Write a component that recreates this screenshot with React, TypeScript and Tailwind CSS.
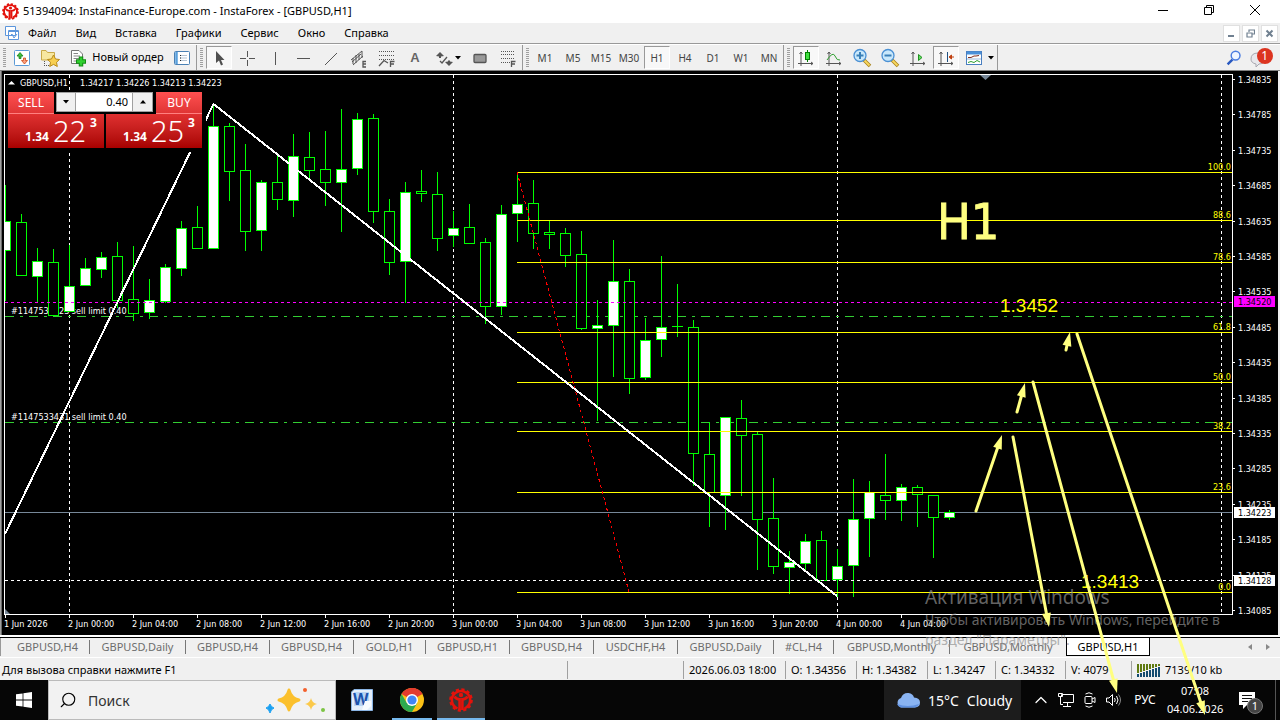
import type { ReactNode } from "react";
import { Search, ChevronUp } from "lucide-react";

const MENU = ["Файл", "Вид", "Вставка", "Графики", "Сервис", "Окно", "Справка"];
const TIMEFRAMES = ["M1", "M5", "M15", "M30", "H1", "H4", "D1", "W1", "MN"];

const TABS = [
  { name: "GBPUSD,H4", width: "w-[84px]" },
  { name: "GBPUSD,Daily", width: "w-[96px]" },
  { name: "GBPUSD,H4", width: "w-[84px]" },
  { name: "GBPUSD,H4", width: "w-[84px]" },
  { name: "GOLD,H1", width: "w-[72px]" },
  { name: "GBPUSD,H1", width: "w-[84px]" },
  { name: "GBPUSD,H4", width: "w-[84px]" },
  { name: "USDCHF,H4", width: "w-[84px]" },
  { name: "GBPUSD,Daily", width: "w-[96px]" },
  { name: "#CL,H4", width: "w-[60px]" },
  { name: "GBPUSD,Monthly", width: "w-[116px]" },
  { name: "GBPUSD,Monthly", width: "w-[116px]" },
];

const STATUS = [
  { text: "", width: "w-[116px]" },
  { text: "2026.06.03 18:00", width: "w-[102px]" },
  { text: "O: 1.34356", width: "w-[71px]" },
  { text: "H: 1.34382", width: "w-[71px]" },
  { text: "L: 1.34247", width: "w-[68px]" },
  { text: "C: 1.34332", width: "w-[70px]" },
  { text: "V: 4079", width: "w-[66px]" },
];

/* high, body top, body bottom, low, bullish */
const CANDLES: [number, number, number, number, number][] = [
  [185, 221, 251, 301, 1], [214, 222, 276, 276, 0], [248, 261, 277, 302, 1], [249, 262, 316, 316, 0],
  [245, 286, 312, 312, 1], [258, 268, 286, 286, 1], [252, 257, 270, 278, 1], [242, 256, 301, 308, 0],
  [246, 299, 314, 321, 0], [279, 300, 313, 319, 1], [264, 267, 302, 303, 1], [221, 228, 269, 276, 1],
  [206, 227, 249, 249, 0], [106, 126, 249, 249, 1], [123, 126, 172, 201, 0], [144, 170, 232, 251, 0],
  [180, 182, 231, 251, 1], [155, 182, 200, 210, 0], [134, 156, 201, 217, 1], [132, 157, 171, 178, 0],
  [131, 169, 183, 206, 0], [109, 169, 183, 232, 1], [113, 119, 169, 175, 1], [114, 118, 212, 223, 0],
  [199, 211, 263, 275, 0], [182, 192, 262, 303, 1], [170, 191, 194, 202, 0], [172, 194, 239, 251, 0],
  [211, 228, 236, 247, 1], [204, 227, 244, 244, 0], [238, 242, 307, 324, 0], [205, 214, 307, 315, 1],
  [172, 204, 214, 242, 1], [180, 203, 234, 249, 0], [221, 232, 235, 249, 0], [228, 233, 256, 267, 0],
  [231, 254, 329, 330, 0], [300, 325, 329, 421, 1], [240, 281, 326, 377, 1], [269, 281, 379, 394, 0],
  [318, 340, 378, 380, 1], [256, 327, 340, 357, 1], [284, 326, 327, 337, 0], [320, 327, 454, 486, 0],
  [422, 454, 493, 527, 0], [417, 417, 496, 530, 1], [400, 418, 436, 496, 0], [432, 434, 520, 570, 0],
  [478, 518, 567, 574, 0], [551, 562, 568, 594, 1], [534, 541, 564, 570, 1], [531, 540, 581, 581, 0],
  [549, 566, 580, 597, 1], [479, 519, 566, 597, 1], [481, 492, 519, 557, 1], [454, 495, 501, 520, 0],
  [484, 487, 501, 521, 1], [485, 487, 495, 527, 0], [495, 495, 518, 558, 0], [510, 512, 518, 520, 1],
];

const FIBO = [
  { y: 172, label: "100.0" },
  { y: 220, label: "88.6" },
  { y: 262, label: "78.6" },
  { y: 332, label: "61.8" },
  { y: 382, label: "50.0" },
  { y: 431, label: "38.2" },
  { y: 492, label: "23.6" },
  { y: 592, label: "0.0" },
];

const PRICES = [
  [79, "1.34835"], [114, "1.34785"], [150, "1.34735"], [185, "1.34685"], [221, "1.34635"], [256, "1.34585"],
  [291, "1.34535"], [327, "1.34485"], [362, "1.34435"], [398, "1.34385"], [433, "1.34335"], [468, "1.34285"],
  [504, "1.34235"], [539, "1.34185"], [575, "1.34135"], [610, "1.34085"],
] as [number, string][];

const DATES = [
  "1 Jun 2026", "2 Jun 00:00", "2 Jun 04:00", "2 Jun 08:00", "2 Jun 12:00", "2 Jun 16:00", "2 Jun 20:00",
  "3 Jun 00:00", "3 Jun 04:00", "3 Jun 08:00", "3 Jun 12:00", "3 Jun 16:00", "3 Jun 20:00", "4 Jun 00:00", "4 Jun 04:00",
];

const ARROWS = [
  [976, 511, 1002, 435],
  [1017, 412, 1025, 383],
  [1066, 350, 1070, 332],
  [1013, 437, 1049, 627],
  [1033, 382, 1117, 693],
  [1077, 334, 1205, 715],
];

/* Broker logo: gear ring with a figure inside */
function GearLogo({ className }: { className: string }) {
  return (
    <svg viewBox="0 0 24 24" className={className} fill="none" stroke="#e3120b" aria-hidden="true">
      <circle cx="12" cy="12" r="10.4" strokeWidth="2.8" strokeDasharray="3.1 2.35" />
      <path d="M8.5 20.4A9 9 0 0 1 6 5.2M15.5 20.4A9 9 0 0 0 18 5.2M6 5.2Q9 3 12 3T18 5.2" strokeWidth="2.6" />
      <circle cx="12" cy="7" r="2.2" fill="#e3120b" stroke="none" />
      <path d="M5.5 8.5Q7 11.2 10.6 11.2V22M18.5 8.5Q17 11.2 13.4 11.2V22" strokeWidth="2.6" />
    </svg>
  );
}

function Tool({ label, pressed, children, className = "w-[26px]" }: { label: string; pressed?: boolean; children: ReactNode; className?: string }) {
  return (
    <button
      type="button"
      aria-label={label}
      className={`mx-px flex h-[23px] shrink-0 items-center justify-center border ${className} ${
        pressed ? "border-t-[#999] border-l-[#999] border-r-white border-b-white bg-[#f8f8f8]" : "border-transparent"
      }`}
    >
      {children}
    </button>
  );
}

function Group({ children }: { children: ReactNode }) {
  return (
    <div className="flex h-full items-center border-r border-[#999]">
      <span className="flex h-5 w-2 shrink-0 justify-center">
        <span className="h-full w-[3px] bg-[repeating-linear-gradient(#a0a0a0_0_1px,#f0f0f0_1px_2px)]" />
      </span>
      {children}
    </div>
  );
}

function Icon({ children, size = "size-5" }: { children: ReactNode; size?: string }) {
  return (
    <svg viewBox="0 0 20 20" className={size} fill="none" stroke="#555" aria-hidden="true">
      {children}
    </svg>
  );
}

function Zoomer({ plus }: { plus?: boolean }) {
  return (
    <Icon>
      <path d="M12 12L18 18" stroke="#a8821c" strokeWidth="3.500" />
      <path d="M12.500 12.500L17.500 17.500" stroke="#f8d860" strokeWidth="1.800" />
      <circle cx="8" cy="7.500" r="6" fill="#c9e8fb" stroke="#4a90d4" strokeWidth="1.300" />
      <path d={plus ? "M4.500 7.500H11.500M8 4V11" : "M4.500 7.500H11.500"} stroke="#3a80b8" strokeWidth="2" />
    </Icon>
  );
}

const AXES = "M5 4V18M2 15.5H17M3.5 6L5 4L6.5 6M15 14L17 15.5L15 17";

function Toolbar() {
  return (
    <div className="flex h-[27px] items-center border-t border-b border-t-white border-b-[#808080] bg-[#f0f0f0]">
      <Group>
        <Tool label="Новый график">
          <Icon>
            <rect x="2.500" y="2.500" width="15" height="15" rx="1" fill="#fff" stroke="#5b9ad6" />
            <path d="M8 4.500L11 8H9V10.500H7V8H5Z" fill="#3fbf3f" stroke="#188018" strokeWidth="0.800" />
            <path d="M12.500 16L15.500 12.500H13.500V10H11.500V12.500H9.500Z" fill="#f8a080" stroke="#d04a18" strokeWidth="0.800" />
          </Icon>
        </Tool>
        <Tool label="Профили">
          <Icon>
            <path d="M1.500 12V2.500H6L7.500 4.500H14.500V12Z" fill="#f7e7a0" stroke="#c8a848" />
            <path d="M4.500 13V18M6 17.500H9" stroke="#555" strokeDasharray="1 1" />
            <path d="M13.500 7L15.500 11L19.500 11.500L16.500 14.300L17.300 18.500L13.500 16.400L9.700 18.500L10.500 14.300L7.500 11.500L11.500 11Z" fill="#f8cf50" stroke="#b88a18" />
          </Icon>
        </Tool>
        <Tool label="Новый ордер" className="w-[102px] gap-1 text-[11px]">
          <Icon>
            <path d="M3.500 2.500H11L14.500 6V15.500H3.500Z" fill="#fff" stroke="#777" />
            <path d="M5.500 5.500H10M5.500 8H12M5.500 10.500H12M5.500 13H9" stroke="#888" />
            <path d="M13 8.500V18.500M8 13.500H18" stroke="#128a12" strokeWidth="4.500" />
            <path d="M13 9.500V17.500M9 13.500H17" stroke="#30d030" strokeWidth="2.500" />
          </Icon>
          Новый ордер
        </Tool>
        <Tool label="Обзор рынка">
          <Icon>
            <rect x="2.500" y="3.500" width="15" height="13" rx="1" fill="#fff" stroke="#4a80b4" />
            <path d="M4.500 4V16" stroke="#5aa0dc" strokeWidth="2.500" />
            <path d="M8 7.500H15M8 10H15M8 12.500H15" stroke="#b4c4d4" />
            <path d="M8 7.500H9M8 10H9M8 12.500H9" stroke="#222" />
          </Icon>
        </Tool>
      </Group>
      <Group>
        <Tool label="Курсор" pressed>
          <Icon><path d="M7 3V15L10 12.500L12 17.500L14 16.500L12 12H15.500Z" fill="#505050" stroke="none" /></Icon>
        </Tool>
        <Tool label="Перекрестие">
          <Icon><path d="M10.500 3V9M10.500 12V18M3 10.500H9M12 10.500H18" /></Icon>
        </Tool>
        <Tool label="Вертикальная линия"><Icon><path d="M10.500 4V17" /></Icon></Tool>
        <Tool label="Горизонтальная линия"><Icon><path d="M4 10.500H17" /></Icon></Tool>
        <Tool label="Трендовая линия"><Icon><path d="M4 17L16 5" /></Icon></Tool>
        <Tool label="Канал">
          <Icon>
            <path d="M2 12L13 3M4 17L14 8M4 10V16M7 7V15M10 6V12M13 3V10M3 14L12 6" />
            <path d="M17 13.500H14V19H17M14 16H17" strokeWidth="1.300" />
          </Icon>
        </Tool>
        <Tool label="Фибоначчи">
          <Icon>
            <path d="M2 3.500H18M2 7.500H18M2 11.500H18" strokeDasharray="1 1" />
            <path d="M2 18L7 12.500L11 15M13.500 19V13.500H17.500M13.500 16H17" strokeWidth="1.300" />
          </Icon>
        </Tool>
        <Tool label="Текст" className="w-[26px] font-['Liberation_Sans'] text-[13px] font-bold text-[#666]">A</Tool>
        <Tool label="Стрелки" className="w-[35px]">
          <Icon>
            <path d="M5 4L9 8L6 8.500V10H4V8.500L1 8ZM14 18L10 14L13 13.500V12.500H15V13.500L18 14Z" fill="#555" stroke="none" />
            <path d="M5 13L7 15L12 9" strokeWidth="1.300" />
          </Icon>
          <svg viewBox="0 0 6 4" className="h-1 w-1.5" aria-hidden="true"><path d="M0 0H6L3 3.500Z" /></svg>
        </Tool>
        <Tool label="Прямоугольник"><Icon><rect x="4" y="6.500" width="12" height="8" rx="1" fill="#999" strokeWidth="1.300" /></Icon></Tool>
        <Tool label="Уровни">
          <Icon>
            <path d="M3 3.500H17M3 6.500H17M3 10.500H17M3 14.500H12" strokeDasharray="1 1" />
            <path d="M13.500 19V13.500H17.500M13.500 16H17" strokeWidth="1.300" />
          </Icon>
        </Tool>
      </Group>
      <Group>
        {TIMEFRAMES.map((tf) => (
          <Tool key={tf} label={tf} pressed={tf === "H1"} className="w-[26px] pt-0.5 text-[10px] text-[#444]">
            {tf}
          </Tool>
        ))}
      </Group>
      <Group>
        <Tool label="Свечи" pressed>
          <Icon>
            <path d={AXES} />
            <path d="M11.500 2V14" stroke="#008000" />
            <rect x="9.500" y="4.500" width="4" height="7" fill="#40e040" stroke="#008000" />
          </Icon>
        </Tool>
        <Tool label="Линия"><Icon><path d={AXES} /><path d="M3 12Q9 3 11 8T16 12" stroke="#30a030" /></Icon></Tool>
        <Tool label="Увеличить"><Zoomer plus /></Tool>
        <Tool label="Уменьшить"><Zoomer /></Tool>
        <Tool label="Автопрокрутка"><Icon><path d={AXES} /><path d="M10.500 6.500V12.500L14 9.500Z" fill="#60e060" stroke="#209020" /></Icon></Tool>
        <Tool label="Сдвиг графика" pressed>
          <Icon><path d={AXES} /><path d="M11.500 4V14" stroke="#205080" /><path d="M13 9L15.500 7V11ZM15.500 9H18" fill="#c04010" stroke="#c04010" /></Icon>
        </Tool>
        <Tool label="Шаблоны" className="w-[35px] gap-1">
          <Icon>
            <rect x="2.500" y="3.500" width="15" height="13" fill="#fff" stroke="#4a7fc0" />
            <path d="M3 5H17" stroke="#4a90d8" strokeWidth="3" />
            <path d="M4 9.500H7L10 8H12L15 7.500" stroke="#803020" />
            <path d="M3 11H17" stroke="#9ab8d8" />
            <path d="M4 14.500L7 13.500L10 14.500L13 12.500L16 14" stroke="#30a030" />
          </Icon>
          <svg viewBox="0 0 6 4" className="h-1 w-1.5" aria-hidden="true"><path d="M0 0H6L3 3.500Z" /></svg>
        </Tool>
      </Group>
      <div className="ml-auto flex items-center gap-2 pr-1.5">
        <button type="button" aria-label="Поиск">
          <Icon size="size-4">
            <path d="M2 18L8 12" stroke="#2858c0" strokeWidth="3" />
            <circle cx="12" cy="7" r="5.500" fill="#f0f6ff" stroke="#4a7ce0" strokeWidth="1.800" />
          </Icon>
        </button>
        <button type="button" aria-label="Сообщения" className="relative h-5 w-6">
          <svg viewBox="0 0 24 20" className="h-5 w-6" aria-hidden="true">
            <path d="M1 11Q1 5 8 5T15 11Q14 16 9 16L6 19V16Q1 15 1 11Z" fill="#e8e8ec" stroke="#a8a8b0" />
            <circle cx="15" cy="8" r="8" fill="#dc3420" />
          </svg>
          <span className="absolute top-0 right-[6px] text-[12px] leading-4 text-white">1</span>
        </button>
      </div>
    </div>
  );
}

function TradePanel() {
  return (
    <div className="absolute top-[21px] left-2 flex gap-0.5 bg-black pr-1 pb-1 font-['Noto_Sans',sans-serif] text-white">
      {[
        { name: "SELL", big: "22" },
        { name: "BUY", big: "25" },
      ].map((side) => (
        <div key={side.name} className="flex w-24 flex-col">
          <button
            type="button"
            className={`h-[22px] w-[46px] border-b border-[#ff8080] bg-gradient-to-b from-[#ff5050] to-[#e03535] text-[12px] leading-[21px] ${
              side.name === "BUY" ? "self-end" : ""
            }`}
          >
            {side.name}
          </button>
          <button type="button" className="flex h-[34px] items-start justify-center gap-1 bg-gradient-to-b from-[#e03030] to-[#a80000] pl-2.5">
            <span className="pt-3.5 text-[12px] leading-[18px] font-bold">1.34</span>
            <span className="text-[29px] leading-[34px] font-light">{side.big}</span>
            <span className="text-[12px] leading-[18px] font-bold">3</span>
          </button>
        </div>
      ))}
      <div className="absolute top-0 left-12 flex h-5 w-[97px] border border-[#a0a0a0] bg-[#f0f0f0] text-black">
        <button type="button" aria-label="Меньше" className="flex w-[18px] items-center justify-center">
          <svg viewBox="0 0 6 4" className="h-1 w-1.5" aria-hidden="true"><path d="M0 0H6L3 3.500Z" /></svg>
        </button>
        <input aria-label="Объём" defaultValue="0.40" className="w-[58px] border-x border-[#a0a0a0] bg-white pr-1 text-right text-[11px]" />
        <button type="button" aria-label="Больше" className="flex flex-1 items-center justify-center">
          <svg viewBox="0 0 6 4" className="h-1 w-1.5" aria-hidden="true"><path d="M0 3.500H6L3 0Z" /></svg>
        </button>
      </div>
    </div>
  );
}

function Chart() {
  return (
    <div className="relative bg-black font-['DejaVu_Sans_Condensed','Noto_Sans',sans-serif]">
      <svg viewBox="0 71 1280 564" className="block h-auto w-full" role="img" aria-label="GBPUSD,H1">
        <rect x="0" y="71" width="1280" height="564" fill="#000" />
        <rect x="0" y="71" width="1" height="564" fill="#a0a0a0" />
        <rect x="1" y="71" width="1" height="564" fill="#696969" />
        <rect x="1278" y="71" width="2" height="564" fill="#f0f0f0" />

        <g shapeRendering="crispEdges" fill="none">
          {/* day separators */}
          {[69, 453, 837, 1221].map((x) => (
            <line key={x} x1={x + 0.5} x2={x + 0.5} y1="75" y2="614" stroke="#fff" strokeDasharray="3 3" />
          ))}
          <line x1="5" x2="1232" y1="316.500" y2="316.500" stroke="#32cd32" strokeDasharray="9 6 3 6" />
          <line x1="5" x2="1232" y1="422.500" y2="422.500" stroke="#32cd32" strokeDasharray="9 6 3 6" />
          <line x1="5" x2="1232" y1="512.500" y2="512.500" stroke="#778899" />
        </g>

        <g fontSize="9" fill="#fff">
          <text x="11" y="314">#1147533123 sell limit 0.40</text>
          <text x="11" y="420">#1147533431 sell limit 0.40</text>
        </g>

        <clipPath id="plot"><rect x="5" y="75" width="1227" height="539" /></clipPath>
        <g shapeRendering="crispEdges" stroke="#0f0" clipPath="url(#plot)">
          {CANDLES.map(([high, top, bottom, low, bull], i) => {
            const x = 5 + i * 16;
            return (
              <g key={i}>
                <line x1={x + 0.5} x2={x + 0.5} y1={high} y2={low} />
                <rect x={x - 4.5} y={top + 0.5} width="10" height={Math.max(bottom - top - 1, 0.01)} fill={bull ? "#fff" : "#000"} />
              </g>
            );
          })}
        </g>

        <g shapeRendering="crispEdges" fill="none">
          <line x1="5" x2="1232" y1="302.500" y2="302.500" stroke="#f0f" strokeDasharray="3 3" />
          <line x1="5" x2="1232" y1="580.500" y2="580.500" stroke="#fff" strokeDasharray="3 3" />
          {FIBO.map((f) => (
            <line key={f.y} x1="517" x2="1232" y1={f.y + 0.5} y2={f.y + 0.5} stroke="#ff0" />
          ))}
          <line x1="517" y1="172" x2="629" y2="592" stroke="#f00" strokeDasharray="3 3" />
          <polyline points="5,534 213.500,104 837,596" stroke="#fff" strokeWidth="2" />
          {/* plot frame */}
          <path d="M4.500 74.500H1232.500V614.500H4.500Z" stroke="#fff" />
        </g>
        <path d="M980 75H991L985.500 80Z" fill="#778899" />
        <path d="M5 609V614H10Z" fill="#778899" />

        <g fontSize="9" fill="#ff0" textAnchor="end">
          {FIBO.map((f) => (
            <text key={f.y} x="1231" y={f.y - 2}>{f.label}</text>
          ))}
        </g>

        <g fontSize="9" fill="#fff">
          {PRICES.map(([y, label]) => (
            <g key={label}>
              <rect x="1233" y={y} width="2" height="1" />
              <text x="1238" y={y + 4}>{label}</text>
            </g>
          ))}
          {DATES.map((label, i) => (
            <g key={label}>
              <rect x={5 + i * 64} y="615" width="1" height="3" />
              <text x={4 + i * 64} y="627">{label}</text>
            </g>
          ))}
          <path d="M8 84.500H15L11.500 81Z" />
          <text x="20" y="86">GBPUSD,H1</text>
          <text x="80" y="86">1.34217 1.34226 1.34213 1.34223</text>
        </g>

        <g fontSize="9">
          <rect x="1234" y="296" width="41" height="11" fill="#f0f" />
          <text x="1238" y="305">1.34520</text>
          <rect x="1234" y="507" width="41" height="11" fill="#fff" />
          <text x="1238" y="516">1.34223</text>
          <rect x="1234" y="575" width="41" height="11" fill="#fff" />
          <text x="1238" y="584">1.34128</text>
        </g>

        <text x="937" y="239" fontSize="50" fill="#ffff80" stroke="#ffff80" strokeWidth="0.8">H1</text>
        <g fontFamily="Liberation Sans, sans-serif" fontSize="19" fill="#ff0">
          <text x="1000" y="312">1.3452</text>
          <text x="1081" y="588">1.3413</text>
        </g>
      </svg>
      <TradePanel />
    </div>
  );
}

/* Hand-drawn forecast, spans the chart and the bars below it */
function Forecast() {
  return (
    <svg viewBox="0 0 1280 720" className="pointer-events-none absolute top-0 left-0 h-auto w-full" aria-hidden="true">
      {ARROWS.map(([x1, y1, x2, y2]) => {
        const len = Math.hypot(x2 - x1, y2 - y1);
        const ux = (x2 - x1) / len;
        const uy = (y2 - y1) / len;
        const bx = x2 - ux * 14;
        const by = y2 - uy * 14;
        return (
          <g key={x1} fill="#ffff80" stroke="#ffff80">
            <line x1={x1} y1={y1} x2={bx} y2={by} strokeWidth="3" strokeLinecap="round" />
            <polygon stroke="none" points={`${x2},${y2} ${bx - uy * 4.5},${by + ux * 4.5} ${bx + uy * 4.5},${by - ux * 4.5}`} />
          </g>
        );
      })}
    </svg>
  );
}

function Taskbar() {
  return (
    <footer className="flex h-10 items-stretch bg-[#060606] text-white">
      <button type="button" aria-label="Пуск" className="flex w-12 items-center justify-center">
        <svg viewBox="0 0 16 16" className="size-4" fill="#fff" aria-hidden="true">
          <path d="M0 2.300L6.600 1.400V7.600H0ZM7.400 1.300L16 0V7.600H7.400ZM0 8.400H6.600V14.600L0 13.700ZM7.400 8.400H16V16L7.400 14.700Z" />
        </svg>
      </button>
      <label className="flex w-72 items-center border border-[#bbb] bg-[#f2f2f2] pr-2 pl-2.5 text-[#333]">
        <Search className="size-[18px] -scale-x-100 text-black" strokeWidth={1.5} />
        <input aria-label="Поиск" placeholder="Поиск" className="min-w-0 flex-1 bg-transparent pl-[11px] text-[14px] placeholder:text-[#333]" />
        <svg viewBox="0 0 62 28" className="h-7 w-[62px]" aria-hidden="true">
          <path d="M24 4Q26 12 34 14Q26 16 24 24Q22 16 14 14Q22 12 24 4Z" fill="#fbc02d" stroke="#fbc02d" strokeWidth="3" strokeLinejoin="round" />
          <path d="M46 12Q47 17 52 18Q47 19 46 24Q45 19 40 18Q45 17 46 12Z" fill="#fbc94a" />
          <path d="M5 18Q6 21 9 22Q6 23 5 27Q4 23 1 22Q4 21 5 18Z" fill="#1ba1f2" stroke="#1ba1f2" />
          <circle cx="40" cy="4" r="2" fill="#f4602c" />
          <circle cx="58" cy="24" r="2" fill="#7cc444" />
        </svg>
      </label>
      <div className="flex flex-1 pl-px">
        <button type="button" aria-label="Word" className="mx-px flex w-12 items-center justify-center">
          <svg viewBox="0 0 22 22" className="size-[22px]" aria-hidden="true">
            <path d="M3 0.500H21.500V21.500H0.500V3Z" fill="#e4eefa" stroke="#8ab4e4" />
            <path d="M3 3H18V17H3Z" fill="#b8d4f4" />
            <text x="2" y="16" fontSize="16" fontWeight="bold" fill="#1c52ac">W</text>
            <path d="M14 12H20V17L16 21H11Z" fill="#f8fbff" />
          </svg>
        </button>
        <button type="button" aria-label="Chrome" className="mx-px flex w-12 flex-col items-center">
          <svg viewBox="0 0 24 24" className="mt-2 mb-1.5 size-6" aria-hidden="true">
            <circle cx="12" cy="12" r="12" fill="#fbc116" />
            <path d="M12 12L1.600 6A12 12 0 0 1 22.400 6Z" fill="#e33b2e" />
            <path d="M12 6H22.400A12 12 0 0 0 12 0Z" fill="#e33b2e" />
            <path d="M1.600 6A12 12 0 0 0 12 24L17.200 15L12 12L6.800 15Z" fill="#2da94f" />
            <circle cx="12" cy="12" r="6" fill="#fff" />
            <circle cx="12" cy="12" r="4.600" fill="#4285f4" />
          </svg>
          <span className="h-0.5 w-10 bg-[#76b9ed]" />
        </button>
        <button type="button" aria-label="InstaForex" className="flex w-12 flex-col items-center bg-[#373737]">
          <GearLogo className="mt-2 mb-1.5 size-6" />
          <span className="h-0.5 w-12 bg-[#76b9ed]" />
        </button>
      </div>
      <button type="button" className="flex w-[137px] items-center gap-2 bg-[#1c1c1c] pl-3 text-[14px]">
        <svg viewBox="0 0 24 16" className="h-4 w-6" aria-hidden="true">
          <path d="M5 15.500A5 5 0 0 1 5 6Q7 0.500 12.500 1Q17 1.500 18 5.500Q24 6 24 10.500T19 15.500Z" fill="#8ab4f2" />
          <path d="M5 15.500Q2 15 1 12Q12 16 23 12Q22 15 19 15.500Z" fill="#5f90e0" />
        </svg>
        <span>15°C</span>
        <span>Cloudy</span>
      </button>
      <div className="flex items-center text-[12px]">
        <button type="button" aria-label="Скрытые значки" className="flex w-9 justify-center pl-1"><ChevronUp className="size-5" strokeWidth={1.500} /></button>
        <svg viewBox="0 0 18 16" className="mr-2 h-4 w-[18px]" fill="none" stroke="#fff" aria-hidden="true">
          <path d="M4.500 5V2.500H16.500V10.500H6M10.500 11V14M6 14.500H14M1.500 1.500H5.500V4.500H1.500ZM3.500 4.500V12.500H6" />
        </svg>
        <svg viewBox="0 0 14 16" className="mr-2 h-4 w-3.5" fill="none" stroke="#fff" aria-hidden="true">
          <rect x="2" y="4.500" width="7" height="7" rx="1" />
          <path d="M9 7L12 5.500V10.500L9 9M2.500 2Q6 -0.500 9.500 2M2.500 14Q6 16.500 9.500 14" />
        </svg>
        <svg viewBox="0 0 18 16" className="h-4 w-[18px]" fill="none" stroke="#fff" aria-hidden="true">
          <path d="M1.500 6H4L7.500 2.500V13.500L4 10H1.500ZM9.500 6Q11 8 9.500 10M11.500 4Q14.500 8 11.500 12" />
          <path d="M13.500 2.500Q17.500 8 13.500 13.500" stroke="#888" />
        </svg>
        <span className="w-11 text-center">РУС</span>
        <div className="w-14 text-center text-[11px] leading-[18px]">
          <div>07:08</div>
          <div>04.06.2026</div>
        </div>
        <button type="button" aria-label="Уведомления" className="relative mr-1 flex w-12 justify-center">
          <svg viewBox="0 0 34 28" className="h-7 w-[34px]" aria-hidden="true">
            <path d="M9 6H25V19H17L13 23V19H9Z" fill="#fff" />
            <path d="M12 9.500H22M12 12.500H22M12 15.500H18" stroke="#111" />
            <circle cx="25" cy="20" r="7.500" fill="#444" stroke="#777" />
          </svg>
          <span className="absolute top-[13px] right-[13px] text-[11px] leading-[14px]">1</span>
        </button>
        <span className="h-10 w-[5px] border-l border-[#555]" />
      </div>
    </footer>
  );
}

export default function App() {
  return (
    <div className="relative flex min-h-screen flex-col overflow-hidden bg-[#060606] font-['Noto_Sans',sans-serif] text-[11px] text-black">
      <header className="flex h-[23px] items-center bg-white pl-0.5">
        <GearLogo className="mr-1 size-[17px]" />
        <h1>51394094: InstaFinance-Europe.com - InstaForex - [GBPUSD,H1]</h1>
        <div className="ml-auto flex pr-0.5">
          {[
            { label: "Свернуть", path: "M1 6.5H11" },
            { label: "Восстановить", path: "M1.5 3.5H8.5V10.5H1.5ZM3.5 3V1.5H10.5V8.5H9" },
            { label: "Закрыть", path: "M1 1L11 11M11 1L1 11" },
          ].map((b) => (
            <button key={b.label} type="button" aria-label={b.label} className="flex w-[46px] justify-center pb-1">
              <svg viewBox="0 0 12 12" className="size-3" fill="none" stroke="#000" aria-hidden="true"><path d={b.path} /></svg>
            </button>
          ))}
        </div>
      </header>
      <nav className="flex h-[21px] items-center border-b border-[#999] bg-[#f0f0f0] pl-1">
        <svg viewBox="0 0 16 16" className="mr-2 size-4" fill="#fff" stroke="#5c96dc" aria-hidden="true">
          <path d="M1.500 1.500H11.500V10.500H1.500ZM4.500 5.500H14.500V14.500H4.500Z" />
          <path d="M5 6.500H14M6 11L8 9L10 13L13 9" fill="none" />
        </svg>
        <div className="flex gap-[19px]">
          {MENU.map((item) => (
            <button key={item} type="button">{item}</button>
          ))}
        </div>
        <div className="ml-auto flex gap-0.5 pr-0.5">
          {["Свернуть окно", "Восстановить окно", "Закрыть окно"].map((label, i) => (
            <button key={label} type="button" aria-label={label} className="flex h-[17px] w-[17px] items-center justify-center border border-[#e0e0e0] bg-white">
              <svg viewBox="0 0 9 9" className="size-[9px]" fill="none" stroke="#708090" aria-hidden="true">
                <path d={["M1 7H7", "M3 3V1H8.500V5H6.500M1 4H6V8H1Z", "M1.500 1.500L7.500 7.500M7.500 1.500L1.500 7.500"][i]} strokeWidth={i === 1 ? 1.2 : 2} />
              </svg>
            </button>
          ))}
        </div>
      </nav>
      <Toolbar />
      <Chart />
      <div className="flex h-[23px] border-t-2 border-b border-white bg-[#f0f0f0]">
        <div className="flex flex-1 items-start border-t border-black text-[11px] leading-[18px] text-[#6d6d6d]">
          <div className="h-[18px] w-1.5 border-l border-[#999]" />
          {TABS.map((tab, i) => (
            <button key={i} type="button" className={`flex h-[18px] items-center justify-center ${tab.width}`}>
              <span className="flex-1">{tab.name}</span>
              {i < 11 && <span className="h-3.5 w-px bg-[#777]" />}
            </button>
          ))}
          <button type="button" className="h-[18px] w-[84px] border-x border-b border-black bg-white leading-[17px] text-black">GBPUSD,H1</button>
          <div className="ml-auto flex h-[18px] items-center gap-3.5 pr-2.5 text-[#888]">
            <svg viewBox="0 0 4 6" className="h-1.5 w-1" fill="currentColor" aria-hidden="true"><path d="M4 0V6L0 3Z" /></svg>
            <svg viewBox="0 0 4 6" className="h-1.5 w-1" fill="currentColor" aria-hidden="true"><path d="M0 0V6L4 3Z" /></svg>
          </div>
        </div>
      </div>
      <div className="flex h-[22px] items-center bg-[#f0f0f0] pt-0.5 text-[11px]">
        <span className="flex-1 pl-0.5">Для вызова справки нажмите F1</span>
        {STATUS.map((s, i) => (
          <span key={i} className={`h-[18px] border-l border-[#a0a0a0] pl-[5px] leading-[18px] whitespace-nowrap ${s.width}`}>{s.text}</span>
        ))}
        <span className="flex h-[18px] w-[149px] items-center gap-1 border-l border-[#a0a0a0] pl-[5px]">
          <svg viewBox="0 0 24 14" className="h-3.5 w-6" aria-hidden="true">
            {[0, 3, 6, 9, 12, 15, 18, 21].map((x, i) => (
              <g key={x}>
                <rect x={x} y="1" width="2" height={9 - i} fill="#5f7a10" />
                <rect x={x} y={11 - i} width="2" height={3 + i} fill="#134b70" />
              </g>
            ))}
          </svg>
          7139/10 kb
        </span>
      </div>
      <Taskbar />

      <div className="pointer-events-none absolute right-0 bottom-[70px] w-[355px] whitespace-nowrap text-[#909090]/70">
        <p className="text-[19px] leading-[26px]">Активация Windows</p>
        <p className="text-[14px] leading-5">Чтобы активировать Windows, перейдите в</p>
        <p className="text-[14px] leading-5">раздел "Параметры".</p>
      </div>
      <Forecast />
    </div>
  );
}
